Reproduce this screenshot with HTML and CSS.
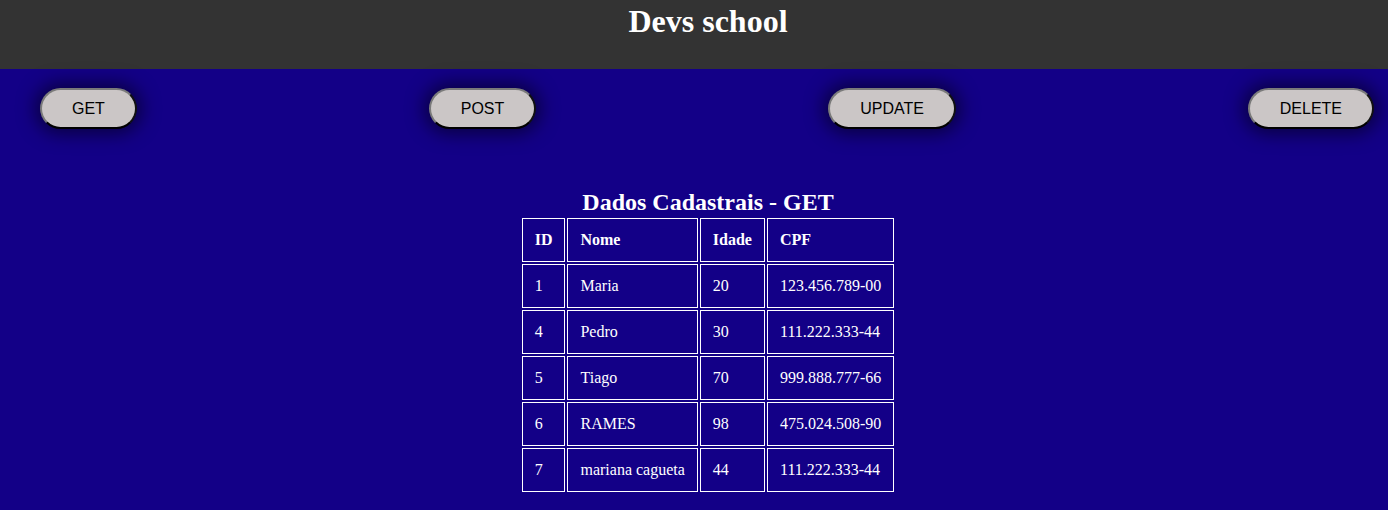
FILE: index.html
```html
<!DOCTYPE html>
<html lang="pt">
<head>
<meta charset="utf-8">
<title>Devs school</title>
<link rel="stylesheet" href="styles.css">
</head>
<body>
<header class="topbar">
  <h1 class="title">Devs school</h1>
</header>
<nav class="actions">
  <button class="btn">GET</button>
  <button class="btn">POST</button>
  <button class="btn">UPDATE</button>
  <button class="btn">DELETE</button>
</nav>
<main class="content">
  <table class="data">
    <caption class="data-caption">Dados Cadastrais - GET</caption>
    <thead>
      <tr><th>ID</th><th>Nome</th><th>Idade</th><th>CPF</th></tr>
    </thead>
    <tbody>
      <tr><td>1</td><td>Maria</td><td>20</td><td>123.456.789-00</td></tr>
      <tr><td>4</td><td>Pedro</td><td>30</td><td>111.222.333-44</td></tr>
      <tr><td>5</td><td>Tiago</td><td>70</td><td>999.888.777-66</td></tr>
      <tr><td>6</td><td>RAMES</td><td>98</td><td>475.024.508-90</td></tr>
      <tr><td>7</td><td>mariana cagueta</td><td>44</td><td>111.222.333-44</td></tr>
    </tbody>
  </table>
</main>
</body>
</html>
```
FILE: styles.css
```css
html, body {
  margin: 0;
  padding: 0;
}
body {
  background: #130087;
  font-family: "Liberation Serif", "Times New Roman", serif;
  color: #ffffff;
  min-height: 510px;
}
.topbar {
  background: #333333;
  height: 69px;
  padding-left: 28px;
  box-sizing: border-box;
}
.title {
  margin: 0;
  padding-top: 3px;
  font-size: 32px;
  font-weight: bold;
  text-align: center;
  color: #ffffff;
}
.actions {
  display: flex;
  justify-content: space-between;
  align-items: center;
  padding: 19px 14px 0 40px;
}
.btn {
  height: 41px;
  padding: 0 30px;
  border-radius: 21px;
  background: #cbc6c6;
  border: 2px solid;
  border-color: #7a7a7a #111111 #000000 #7a7a7a;
  box-shadow: 0 0 18px 5px rgba(0, 0, 0, 0.5);
  font-family: "Liberation Sans", Arial, sans-serif;
  font-size: 16px;
  color: #000000;
}
.content {
  display: flex;
  justify-content: center;
  padding: 60px 0 0 28px;
}
.data {
  border-spacing: 2px;
  border-collapse: separate;
  font-size: 16px;
}
.data-caption {
  font-size: 24px;
  font-weight: bold;
  line-height: 27px;
  color: #ffffff;
}
.data th,
.data td {
  border: 1px solid #ffffff;
  padding: 12px 12px;
  text-align: left;
  line-height: 18px;
  color: #ffffff;
}
.data th {
  font-weight: bold;
}
```
